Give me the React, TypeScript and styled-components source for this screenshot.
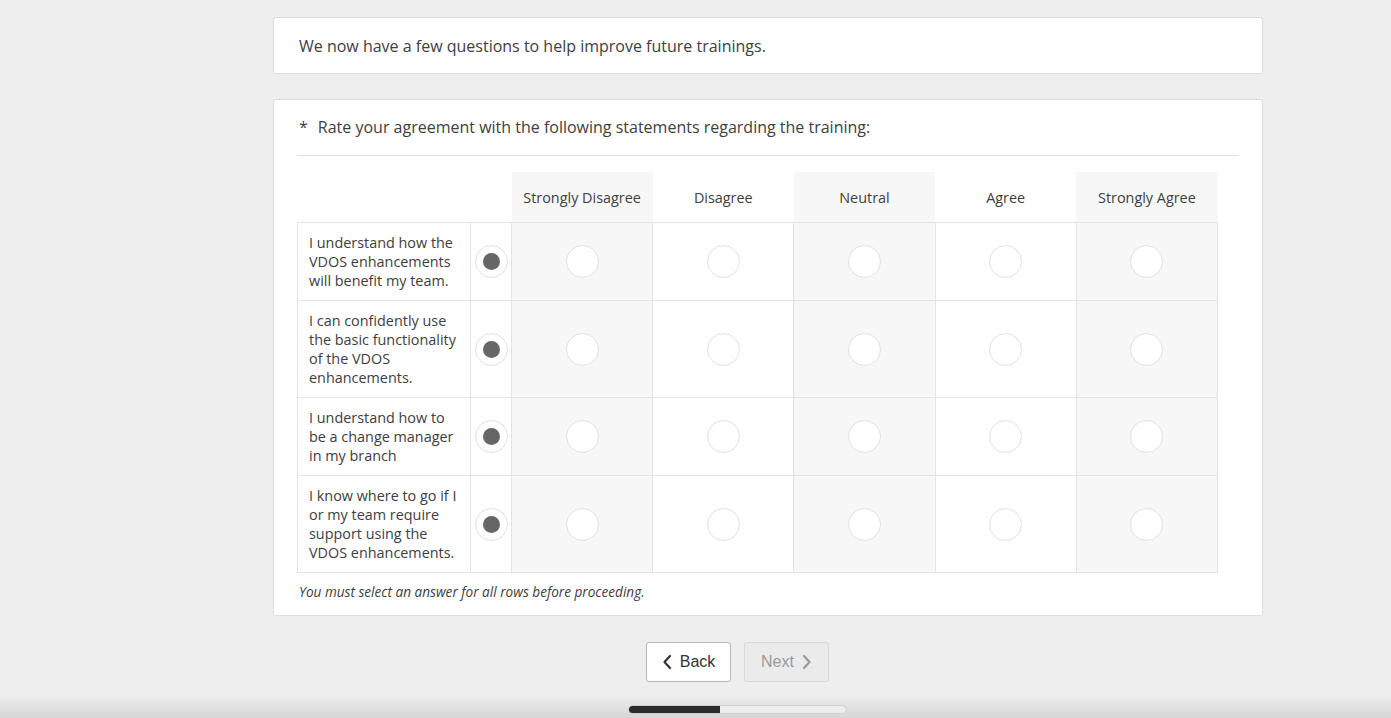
import { FC } from "react";
import styled, { createGlobalStyle } from "styled-components";

const GlobalStyle = createGlobalStyle`
  html {
    min-height: 100%;
    background: linear-gradient(to bottom, #eeeeee calc(100% - 24px), #d6d6d6 100%);
  }
  body {
    margin: 0;
    min-height: 100vh;
    font-family: "Open Sans", "Liberation Sans", sans-serif;
    color: #404040;
  }
`;

const Page = styled.div`
  display: flex;
  flex-direction: column;
  align-items: center;
  padding: 17px 0 0 84px;
`;

const Column = styled.div`
  width: 990px;
  margin-left: 61px;
  display: flex;
  flex-direction: column;
  gap: 25px;
`;

const Card = styled.div`
  background: #fff;
  border: 1px solid #dcdce3;
  border-radius: 3px;
  box-sizing: border-box;
`;

const IntroCard = styled(Card)`
  height: 57px;
  padding: 0 25px;
  display: flex;
  align-items: center;
  font-size: 16px;
`;

const QuestionCard = styled(Card)`
  padding: 16px 24px 14px 23px;
`;

const Title = styled.div`
  display: flex;
  gap: 10px;
  font-size: 16px;
  line-height: 22px;
  padding: 0 2px 17px;
  border-bottom: 1px solid #dcdce3;
`;

const Matrix = styled.table`
  margin-top: 16px;
  border-collapse: collapse;
  table-layout: fixed;
  width: 921px;
`;

const HeadCell = styled.th<{ $shaded?: boolean }>`
  height: 50px;
  padding: 0;
  font-weight: 400;
  font-size: 14.4px;
  color: #404040;
  text-align: center;
  background: ${(p) => (p.$shaded ? "#f7f7f7" : "#fff")};
`;

const LabelCell = styled.td`
  border: 1px solid #e4e4e4;
  padding: 10px 11px;
  font-size: 14.4px;
  line-height: 19px;
  color: #404040;
`;

const Cell = styled.td<{ $shaded?: boolean }>`
  border: 1px solid #e4e4e4;
  padding: 0;
  text-align: center;
  vertical-align: middle;
  background: ${(p) => (p.$shaded ? "#f7f7f7" : "#fff")};
`;

const Radio = styled.span<{ $checked?: boolean }>`
  display: inline-flex;
  align-items: center;
  justify-content: center;
  width: 31px;
  height: 31px;
  border-radius: 50%;
  border: 1px solid #e0e0e0;
  background: #fff;
  vertical-align: middle;

  &::after {
    content: "";
    display: ${(p) => (p.$checked ? "block" : "none")};
    width: 17px;
    height: 17px;
    border-radius: 50%;
    background: #666;
  }
`;

const Note = styled.div`
  margin-top: 9px;
  font-size: 13.6px;
  font-style: italic;
  color: #404040;
  padding-left: 2px;
`;

const Nav = styled.div`
  display: flex;
  justify-content: center;
  gap: 13px;
  margin-top: 26px;
`;

const NavButton = styled.button<{ $disabled?: boolean }>`
  width: 85px;
  height: 40px;
  display: inline-flex;
  align-items: center;
  justify-content: center;
  gap: 8px;
  font-family: "Liberation Sans", Arial, sans-serif;
  font-size: 16px;
  border-radius: 3px;
  border: 1px solid ${(p) => (p.$disabled ? "#d8d8d8" : "#b8b8b8")};
  background: ${(p) => (p.$disabled ? "#ebebeb" : "#fff")};
  color: ${(p) => (p.$disabled ? "#9a9a9a" : "#333")};
  padding: 0;
`;

const Progress = styled.div`
  margin-top: 23px;
  width: 219px;
  height: 9px;
  border-radius: 5px;
  border: 1px solid #cfcfcf;
  background: #ededed;
  overflow: hidden;
  box-sizing: border-box;
  display: flex;
`;

const ProgressFill = styled.div`
  background: #2b2b2b;
  height: 100%;
`;

const Chevron: FC<{ dir: "left" | "right" }> = ({ dir }) => (
  <svg width="10" height="16" viewBox="0 0 10 16" fill="none">
    <path
      d={dir === "left" ? "M8 2 L2.5 8 L8 14" : "M2 2 L7.5 8 L2 14"}
      stroke="currentColor"
      strokeWidth="2.2"
      strokeLinecap="round"
      strokeLinejoin="round"
    />
  </svg>
);

const choices = ["Strongly Disagree", "Disagree", "Neutral", "Agree", "Strongly Agree"];

const statements = [
  "I understand how the VDOS enhancements will benefit my team.",
  "I can confidently use the basic functionality of the VDOS enhancements.",
  "I understand how to be a change manager in my branch",
  "I know where to go if I or my team require support using the VDOS enhancements.",
];

export default function App() {
  return (
    <>
      <GlobalStyle />
      <Page>
        <Column>
          <IntroCard>We now have a few questions to help improve future trainings.</IntroCard>
          <QuestionCard>
            <Title>
              <span>*</span>
              <span>Rate your agreement with the following statements regarding the training:</span>
            </Title>
            <Matrix>
              <colgroup>
                <col style={{ width: 173 }} />
                <col style={{ width: 41 }} />
                {choices.map((c) => (
                  <col key={c} />
                ))}
              </colgroup>
              <thead>
                <tr>
                  <HeadCell />
                  <HeadCell />
                  {choices.map((c, i) => (
                    <HeadCell key={c} $shaded={i % 2 === 0}>
                      {c}
                    </HeadCell>
                  ))}
                </tr>
              </thead>
              <tbody>
                {statements.map((s) => (
                  <tr key={s}>
                    <LabelCell>{s}</LabelCell>
                    <Cell>
                      <Radio $checked />
                    </Cell>
                    {choices.map((c, i) => (
                      <Cell key={c} $shaded={i % 2 === 0}>
                        <Radio />
                      </Cell>
                    ))}
                  </tr>
                ))}
              </tbody>
            </Matrix>
            <Note>You must select an answer for all rows before proceeding.</Note>
          </QuestionCard>
        </Column>
        <Nav>
          <NavButton>
            <Chevron dir="left" />
            Back
          </NavButton>
          <NavButton $disabled>
            Next
            <Chevron dir="right" />
          </NavButton>
        </Nav>
        <Progress>
          <ProgressFill style={{ width: "42%" }} />
        </Progress>
      </Page>
    </>
  );
}
